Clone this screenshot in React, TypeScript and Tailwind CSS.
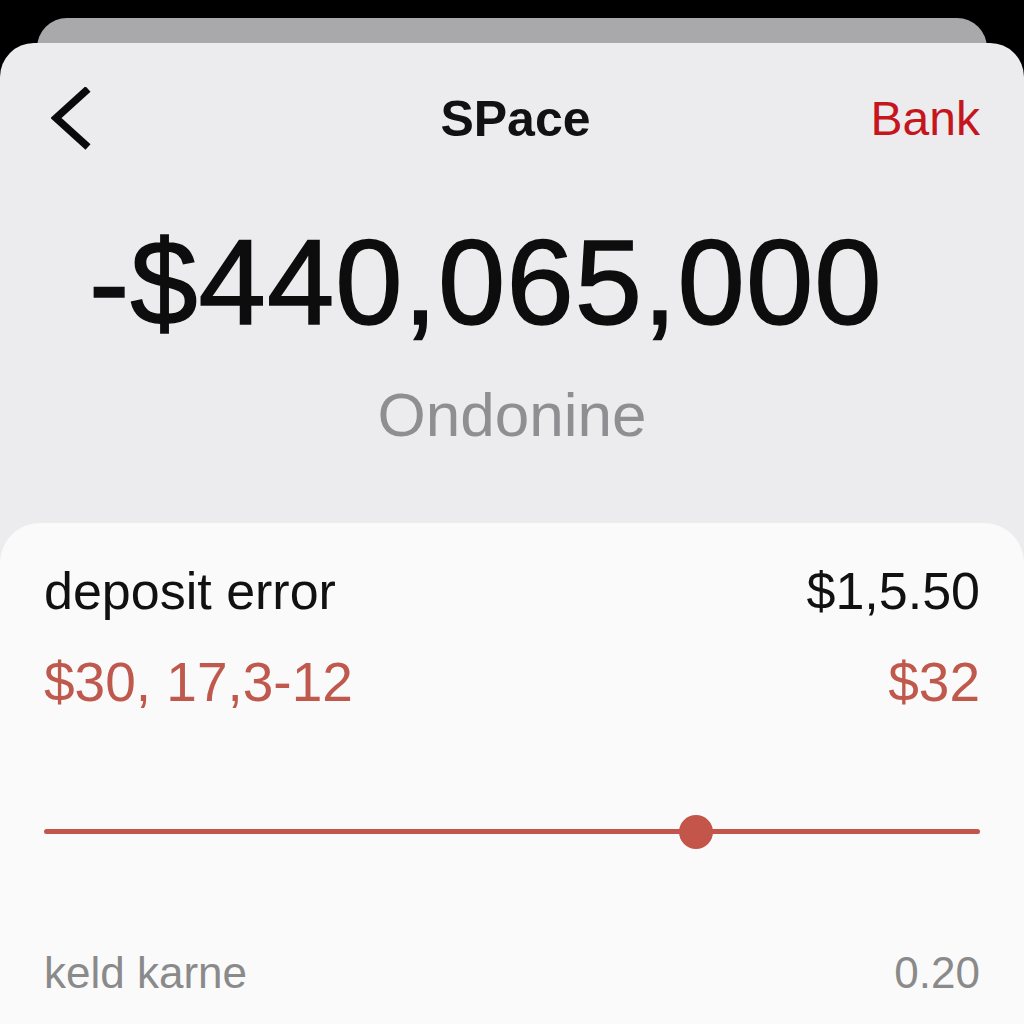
import React from "react";

const sans = { fontFamily: '"Liberation Sans", Arial, sans-serif' };

function BackChevron() {
    return (
        <svg width="42" height="64" viewBox="0 0 42 64" fill="none">
            <path d="M37 2 L5 31 L37 60" stroke="#0a0a0a" strokeWidth="7.5" strokeLinejoin="miter" />
        </svg>
    );
}

function Row({ left, right, className }: { left: string; right: string; className: string }) {
    return (
        <div className={`flex items-start justify-between leading-none ${className}`}>
            <span>{left}</span>
            <span>{right}</span>
        </div>
    );
}

export default function App() {
    return (
        <div className="w-[1024px] h-[1024px] bg-black overflow-hidden flex flex-col pt-[18px]" style={sans}>
            {/* Card stacked behind */}
            <div className="mx-[37px] h-[45px] -mb-[20px] rounded-t-[30px] bg-[#a9a9ab]" />

            {/* Main card */}
            <div className="relative flex-1 flex flex-col bg-[#ececee] rounded-t-[34px]">
                {/* Header */}
                <div className="mt-[44px] h-[64px] grid grid-cols-3 items-center pl-[51px] pr-[44px]">
                    <button className="justify-self-start">
                        <BackChevron />
                    </button>
                    <h1 className="justify-self-center text-[50px] font-bold leading-none text-[#111]">SPace</h1>
                    <span className="justify-self-end text-[48px] leading-none text-[#c4161c]">Bank</span>
                </div>

                {/* Balance */}
                <div className="mt-[71px] pl-[89px] text-[121px] tracking-[1px] leading-none text-[#0d0d0d] [-webkit-text-stroke:1.5px_#0d0d0d]">
                    -$440,065,000
                </div>
                <div className="mt-[41px] text-center text-[62px] leading-none text-[#8e8e93]">Ondonine</div>

                {/* Details sheet */}
                <div className="mt-[77px] flex-1 flex flex-col bg-[#fafafa] rounded-t-[40px] px-[44px] pt-[42px]">
                    <Row left="deposit error" right="$1,5.50" className="text-[52px] text-[#111]" />
                    <Row left="$30, 17,3-12" right="$32" className="mt-[38px] text-[55px] text-[#c0594d]" />

                    {/* Slider */}
                    <div className="relative mt-[104px] h-[36px]">
                        <div className="absolute left-0 right-0 top-[15px] h-[5px] rounded-full bg-[#c4554b]" />
                        <div className="absolute left-[635px] top-[1px] w-[34px] h-[34px] rounded-full bg-[#c4554b]" />
                    </div>

                    <Row left="keld karne" right="0.20" className="mt-[101px] text-[44px] text-[#8a8a8a]" />
                </div>
            </div>
        </div>
    );
}
